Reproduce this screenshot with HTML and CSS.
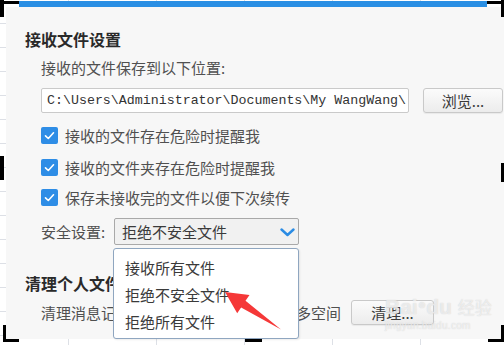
FILE: index.html
```html
<!DOCTYPE html>
<html lang="zh-CN">
<head>
<meta charset="utf-8">
<title>接收文件设置</title>
<link rel="stylesheet" href="styles.css">
</head>
<body>
<div class="screen">
  <div class="dialog">
    <div class="titlebar"></div>
    <div class="content">
      <h2 class="section-title">接收文件设置</h2>
      <div class="label">接收的文件保存到以下位置:</div>
      <div class="path-row">
        <div class="path-input">C:\Users\Administrator\Documents\My WangWang\</div>
        <button class="btn btn-browse">浏览...</button>
      </div>
      <label class="check check-1">
        <span class="box"><svg viewBox="0 0 17 17" width="17" height="17"><polyline points="4.5,8.8 7.3,11.5 12.5,5.8" fill="none" stroke="#fff" stroke-width="1.6" stroke-linecap="round" stroke-linejoin="round"/></svg></span>
        <span class="check-text">接收的文件存在危险时提醒我</span>
      </label>
      <label class="check check-2">
        <span class="box"><svg viewBox="0 0 17 17" width="17" height="17"><polyline points="4.5,8.8 7.3,11.5 12.5,5.8" fill="none" stroke="#fff" stroke-width="1.6" stroke-linecap="round" stroke-linejoin="round"/></svg></span>
        <span class="check-text">接收的文件夹存在危险时提醒我</span>
      </label>
      <label class="check check-3">
        <span class="box"><svg viewBox="0 0 17 17" width="17" height="17"><polyline points="4.5,8.8 7.3,11.5 12.5,5.8" fill="none" stroke="#fff" stroke-width="1.6" stroke-linecap="round" stroke-linejoin="round"/></svg></span>
        <span class="check-text">保存未接收完的文件以便下次续传</span>
      </label>
      <div class="security-row">
        <span class="inline-label">安全设置:</span>
        <div class="select">
          <span class="select-value">拒绝不安全文件</span>
          <svg class="chevron" viewBox="0 0 15 9" width="15" height="9"><polyline points="1.5,1.5 7.5,7 13.5,1.5" fill="none" stroke="#2b8ce4" stroke-width="2.4" stroke-linecap="round" stroke-linejoin="round"/></svg>
          <ul class="dropdown">
            <li>接收所有文件</li>
            <li>拒绝不安全文件</li>
            <li>拒绝所有文件</li>
          </ul>
        </div>
      </div>
      <h2 class="section-title section-2">清理个人文件夹</h2>
      <div class="clean-row">
        <span class="clean-text">清理消息记录中的图片和文件，腾出更多空间</span>
        <button class="btn btn-clean">清理...</button>
      </div>
    </div>
  </div>

  <div class="watermark">
    <div class="wm-main">Bai<span class="wm-paw">●</span>du <span class="wm-cn">经验</span></div>
    <div class="wm-url">jingyan.baidu.com</div>
  </div>

  <svg class="arrow" viewBox="0 0 504 345" width="504" height="345">
    <polygon points="225,292 249.5,295 245.5,300.8 281,329.5 241.1,307.4 237.2,313.3" fill="#f53838"/>
  </svg>

  <div class="mark mark-tl-h"></div>
  <div class="mark mark-tl-v"></div>
  <div class="mark mark-tr-h"></div>
  <div class="mark mark-tr-v"></div>
  <div class="mark mark-ml"></div>
  <div class="mark mark-mr"></div>
  <div class="mark mark-bl-h"></div>
  <div class="mark mark-bl-v"></div>
  <div class="mark mark-bm"></div>
  <div class="mark mark-br-h"></div>
  <div class="mark mark-br-v"></div>
</div>
</body>
</html>
```

FILE: styles.css
```css
* { box-sizing: border-box; }
html, body { margin: 0; padding: 0; }
body {
  font-family: "Noto Sans CJK SC", "Noto Sans", sans-serif;
  background: #fff;
}
.screen {
  position: relative;
  width: 504px;
  height: 345px;
  overflow: hidden;
  background-color: #fff;
  background-image:
    repeating-linear-gradient(to right, transparent 0 68px, #dde0e6 68px 69px, transparent 69px 88px),
    repeating-linear-gradient(to bottom, transparent 0 23px, #dde0e6 23px 24px);
}
.dialog {
  margin-left: 6px;
  padding-top: 1px;
  width: 498px;
  height: 339px;
  display: flex;
  flex-direction: column;
}
.titlebar {
  height: 6px;
  margin: 0 17px 0 13px;
  background: #2a8fe4;
}
.content {
  flex: 1;
  background: #f7f7f7;
  padding: 22px 0 0 19px;
  color: #505050;
  font-size: 15px;
}
.section-title {
  margin: 0;
  font-size: 16px;
  line-height: 20px;
  font-weight: bold;
  color: #2a2a2a;
}
.label {
  margin: 9px 0 0 16px;
  line-height: 20px;
}
.path-row {
  display: flex;
  margin: 10px 0 0 16px;
  height: 25px;
}
.path-input {
  width: 368px;
  height: 25px;
  background: #fff;
  border: 1px solid #cacaca;
  border-radius: 2px;
  padding-left: 5px;
  font-family: "Liberation Mono", "DejaVu Sans Mono", monospace;
  font-size: 13.3px;
  line-height: 23px;
  color: #333;
  white-space: nowrap;
  overflow: hidden;
}
.btn {
  font-family: "Noto Sans CJK SC", sans-serif;
  font-size: 15px;
  color: #3a3a3a;
  height: 25px;
  padding: 0;
  line-height: 23px;
  background: linear-gradient(#fbfbfb, #ececec);
  border: 1px solid #c9c9c9;
  border-radius: 3px;
  box-shadow: 0 1px 1px rgba(0,0,0,0.06);
}
.btn-browse {
  margin-left: 14px;
  width: 80px;
}
.check {
  display: flex;
  align-items: center;
  height: 17px;
  margin-left: 16px;
}
.check-1 { margin-top: 14px; }
.check-2 { margin-top: 15px; }
.check-3 { margin-top: 13px; }
.box {
  width: 17px;
  height: 17px;
  border-radius: 2px;
  background: #2e8de6;
  display: flex;
}
.check-text {
  margin-left: 7px;
  line-height: 20px;
}
.security-row {
  display: flex;
  align-items: center;
  margin: 12px 0 0 16px;
  height: 27px;
}
.inline-label {
  width: 73px;
  line-height: 20px;
}
.select {
  position: relative;
  width: 185px;
  height: 27px;
  background: #f1f1f1;
  border: 1px solid #a9a9a9;
  border-radius: 2px;
  display: flex;
  align-items: center;
  justify-content: space-between;
  padding: 0 3px 0 7px;
}
.select-value {
  line-height: 20px;
  color: #3a3a3a;
}
.chevron { margin-top: 1px; }
.dropdown {
  position: absolute;
  z-index: 3;
  top: 29px;
  left: -2px;
  width: 186px;
  height: 91px;
  margin: 0;
  padding: 5px 0 0 0;
  list-style: none;
  background: #fff;
  border: 1px solid #8fa6c0;
  border-radius: 3px;
  box-shadow: 1px 1px 2px rgba(0,0,0,0.08);
}
.dropdown li {
  height: 27px;
  line-height: 27px;
  padding-left: 11px;
  color: #3a3a3a;
}
.section-2 { margin-top: 28px; }
.clean-row {
  display: flex;
  margin: 7px 0 0 16px;
  height: 25px;
  align-items: center;
}
.clean-text {
  width: 310px;
  line-height: 20px;
  white-space: nowrap;
}
.btn-clean { width: 83px; }
.watermark {
  position: absolute;
  left: 385px;
  top: 291px;
  color: rgba(255,255,255,0.6);
  text-shadow: 0 0 1px rgba(190,190,190,0.8);
  font-family: "Liberation Sans", sans-serif;
  z-index: 2;
}
.wm-main { font-size: 21px; line-height: 26px; font-weight: bold; }
.wm-paw { font-size: 14px; vertical-align: 5px; }
.wm-cn { font-family: "Noto Sans CJK SC", sans-serif; font-size: 17px; font-weight: normal; }
.wm-url { font-size: 10px; line-height: 12px; letter-spacing: 0.3px; }
.arrow {
  position: absolute;
  left: 0;
  top: 0;
  z-index: 4;
}
.mark {
  position: absolute;
  background: #000;
  z-index: 5;
}
.mark-tl-h { left: 0; top: 1px; width: 19px; height: 3px; }
.mark-tl-v { left: 0; top: 0; width: 4px; height: 17px; }
.mark-tr-h { left: 487px; top: 1px; width: 17px; height: 3px; }
.mark-tr-v { left: 501px; top: 0; width: 3px; height: 17px; }
.mark-ml { left: 0; top: 156px; width: 4px; height: 24px; }
.mark-mr { left: 501px; top: 163px; width: 3px; height: 19px; }
.mark-bl-h { left: 3px; top: 339px; width: 16px; height: 3px; }
.mark-bl-v { left: 3px; top: 325px; width: 3px; height: 17px; }
.mark-bm { left: 245px; top: 339px; width: 17px; height: 3px; }
.mark-br-h { left: 488px; top: 339px; width: 16px; height: 3px; }
.mark-br-v { left: 501px; top: 325px; width: 3px; height: 17px; }
```
